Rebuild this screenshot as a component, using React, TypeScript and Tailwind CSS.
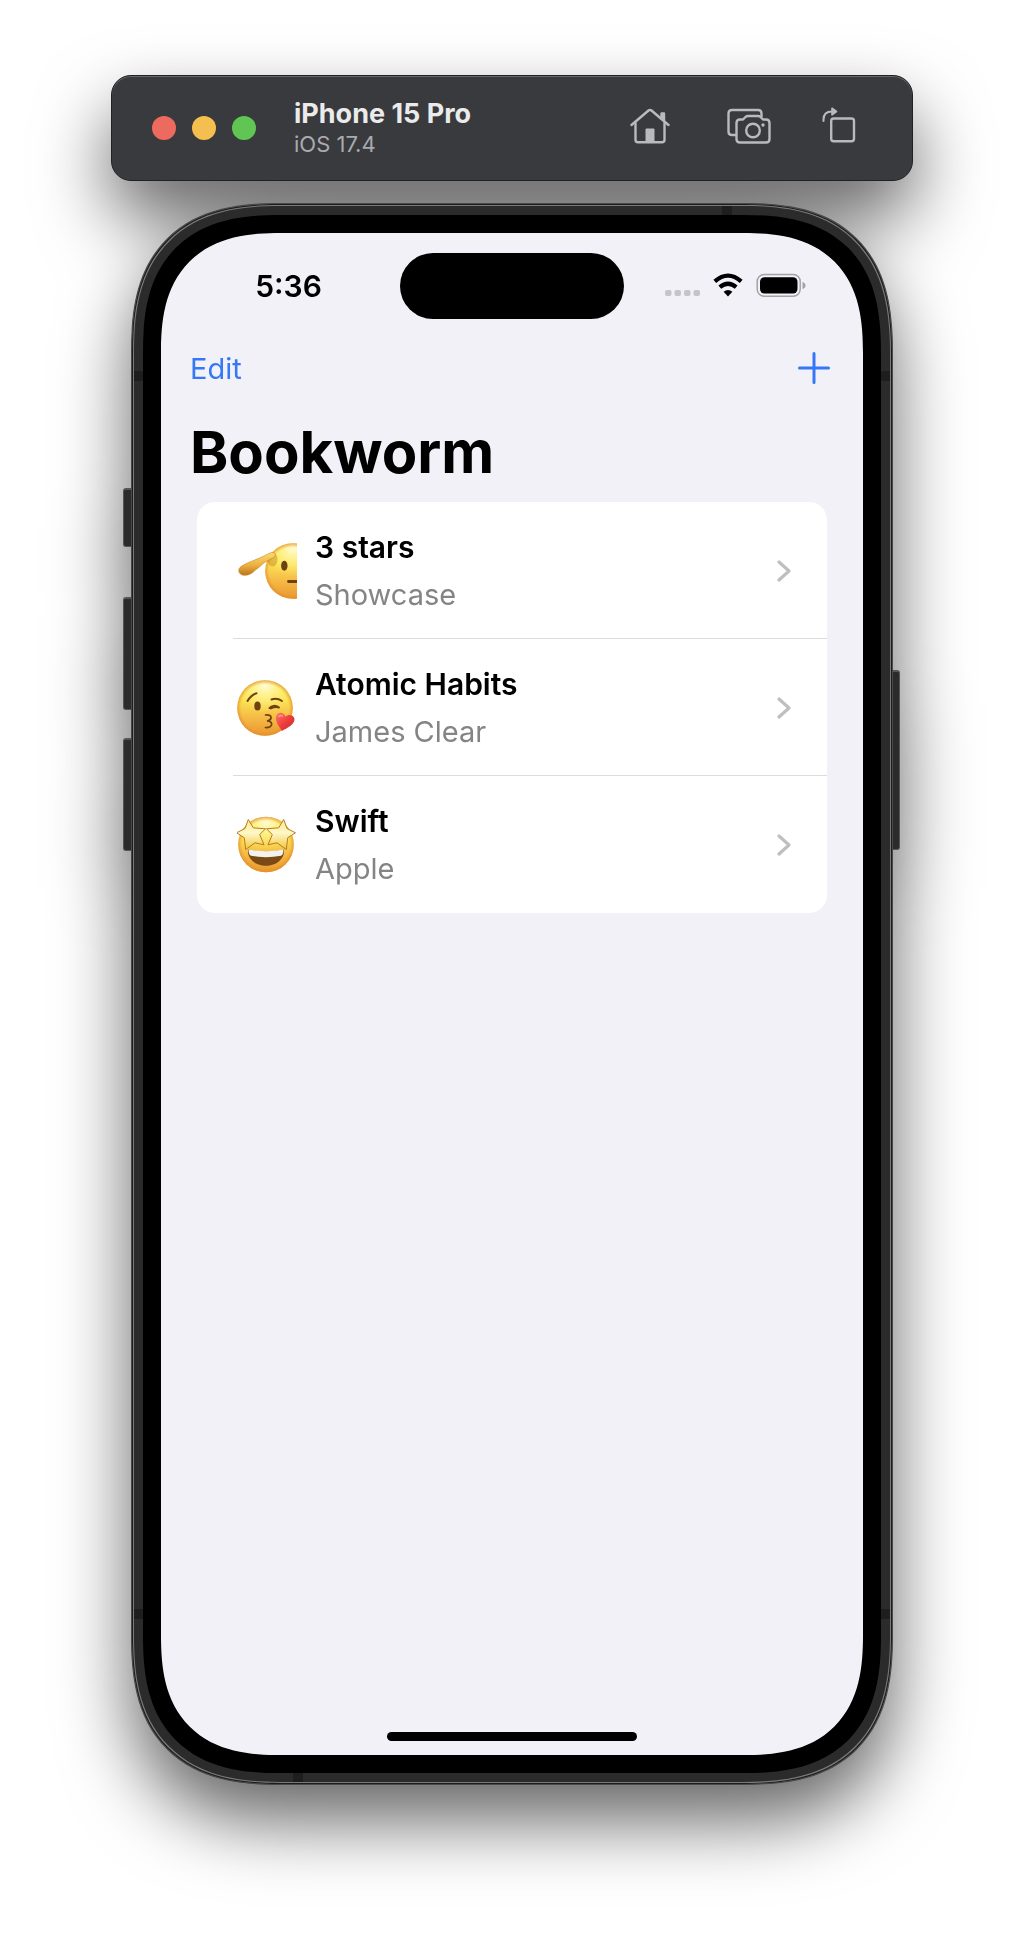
import React from "react";

type Book = { title: string; author: string; mood: string; face: React.ReactNode };

function Gradients() {
  return (
    <defs>
      <linearGradient id="skin" x1="0" y1="0" x2="0" y2="1">
        <stop offset="0" stopColor="#f8d44c" />
        <stop offset="0.12" stopColor="#fdec60" />
        <stop offset="0.35" stopColor="#fbe454" />
        <stop offset="0.65" stopColor="#f6bd48" />
        <stop offset="1" stopColor="#e9962f" />
      </linearGradient>
      <radialGradient id="shine" cx="0.5" cy="0.1" r="0.5">
        <stop offset="0" stopColor="#fffde0" stopOpacity="0.9" />
        <stop offset="1" stopColor="#fff27a" stopOpacity="0" />
      </radialGradient>
      <radialGradient id="rim" cx="0.5" cy="0.5" r="0.5">
        <stop offset="0.85" stopColor="#e8962f" stopOpacity="0" />
        <stop offset="1" stopColor="#e08a28" stopOpacity="0.7" />
      </radialGradient>
      <linearGradient id="arm" x1="0" y1="0" x2="0" y2="1">
        <stop offset="0" stopColor="#fbdc70" />
        <stop offset="0.55" stopColor="#eeb142" />
        <stop offset="1" stopColor="#b97418" />
      </linearGradient>
      <linearGradient id="star" x1="0" y1="0" x2="0" y2="1">
        <stop offset="0" stopColor="#fdeb8c" />
        <stop offset="0.45" stopColor="#fff7c8" />
        <stop offset="1" stopColor="#efc63c" />
      </linearGradient>
      <linearGradient id="heart" x1="0" y1="0" x2="1" y2="1">
        <stop offset="0" stopColor="#ff7468" />
        <stop offset="0.5" stopColor="#ee3f3c" />
        <stop offset="1" stopColor="#c9252a" />
      </linearGradient>
    </defs>
  );
}

function Head({ cx, cy, r }: { cx: number; cy: number; r: number }) {
  return (
    <>
      <circle cx={cx} cy={cy} r={r} fill="url(#skin)" />
      <circle cx={cx} cy={cy} r={r} fill="url(#shine)" />
      <circle cx={cx} cy={cy} r={r} fill="url(#rim)" />
    </>
  );
}

const salute = (
  <>
    <Head cx={56} cy={30} r={27.8} />
    <ellipse cx="35.500" cy="18.500" rx="5" ry="7" fill="#b8741c" opacity="0.4" />
    <path d="M36 11.500 C39 12 39 15.500 36.500 16.500 L30 20 C26 22 23 26 19 28.500 C15 33 10 35 6 34.200 C1 33 0.500 28 4 25.500 C10 21.500 21 18 27 15 C30 13.500 34 11 36 11.500 Z" fill="url(#arm)" stroke="#c98620" strokeWidth="0.6" />
    <ellipse cx="47.300" cy="24.700" rx="3.200" ry="5" fill="#6d4210" />
    <path d="M51.500 40.500 H62" stroke="#6d4210" strokeWidth="2.800" strokeLinecap="round" />
  </>
);

const kiss = (
  <g transform="translate(0 1)">
    <Head cx={28} cy={29} r={27.8} />
    <path d="M10.500 22 Q14 16 19.500 14.200" stroke="#6d4210" strokeWidth="2" fill="none" strokeLinecap="round" />
    <path d="M34.500 20.500 Q40 18.500 45 22" stroke="#6d4210" strokeWidth="2" fill="none" strokeLinecap="round" />
    <ellipse cx="20.500" cy="27" rx="3.200" ry="4.600" fill="#6d4210" />
    <path d="M32.500 29 Q37 24.500 42 28.500 M34 29.500 Q38 27.500 42 28.500" stroke="#6d4210" strokeWidth="1.900" fill="none" strokeLinecap="round" />
    <path d="M28.500 36 Q34.500 35.500 34 39 Q33.500 41.500 30 42 Q35.500 42.500 34.500 46 Q33.500 48.800 28.500 48.500" stroke="#6d4210" strokeWidth="1.700" fill="none" strokeLinecap="round" />
    <path d="M45 52 C41 46 37.500 41 39.500 36.500 C41.500 32.500 46.500 33 48.300 37.500 C51.500 34.500 57 36 57.500 40 C57.800 45.500 50 49 45 52 Z" fill="url(#heart)" />
    <path d="M42 37.500 Q43.500 35.500 45.500 37" stroke="#ff9d92" strokeWidth="1.500" fill="none" strokeLinecap="round" />
  </g>
);

const STAR = "M-0.500 17.800 L8 13.500 L11.300 4.500 L16.300 12.800 L28.500 13.800 L22.700 19.500 L27 29.800 L18 27.800 L8.700 34.500 L7.300 22.800 Z";

const starEyes = (
  <>
    <Head cx={29} cy={29.5} r={27.8} />
    <path d="M11 34.500 Q29 38.500 47 34.500 C48 44 39 50.800 29 50.800 C19 50.800 10 44 11 34.500 Z" fill="#7a4a14" />
    <path d="M11.500 34.500 Q29 38 46.500 34.500 Q46.500 39.500 44 40.800 Q29 43.500 14 40.800 Q11.500 39.500 11.500 34.500 Z" fill="#f4f2ef" />
    <g fill="url(#star)" stroke="#b97c1c" strokeWidth="1" strokeLinejoin="round">
      <path d={STAR} />
      <path d={STAR} transform="translate(58 0) scale(-1 1)" />
    </g>
  </>
);

const books: Book[] = [
  { title: "3 stars", author: "Showcase", mood: "Saluting face", face: salute },
  { title: "Atomic Habits", author: "James Clear", mood: "Face blowing a kiss", face: kiss },
  { title: "Swift", author: "Apple", mood: "Star-struck face", face: starEyes },
];

function HomeIcon() {
  return (
    <svg viewBox="0 0 40 36" className="h-9 w-10" fill="none" stroke="#b9bac0" strokeWidth="2.4" strokeLinecap="round" strokeLinejoin="round">
      <path d="M1.500 17 L18.500 2.500 Q20 1.300 21.500 2.500 L38.500 17" />
      <path d="M5.500 15 V32 Q5.500 34.200 8 34.200 H32 Q34.500 34.200 34.500 32 V15" />
      <path d="M31.500 10.500 V5.500 H34 V13" fill="#b9bac0" />
      <path d="M16 34 V21 H24 V34 Z" fill="#b9bac0" strokeWidth="1" />
    </svg>
  );
}

function CameraIcon() {
  return (
    <svg viewBox="0 0 44 36" className="h-9 w-11" fill="none" stroke="#b9bac0" strokeWidth="2.400" strokeLinecap="round" strokeLinejoin="round">
      <path d="M9 27 H5 Q1.500 27 1.500 23.500 V5.500 Q1.500 2 5 2 H31 Q34.500 2 34.500 5.500 V8.500" />
      <path d="M13 11.500 H16 L18.500 9 Q19.500 8 21 8 H31 Q32.500 8 33.500 9 L36 11.500 H39 Q42.500 11.500 42.500 15 V31 Q42.500 34.500 39 34.500 H13 Q9.500 34.500 9.500 31 V15 Q9.500 11.500 13 11.500 Z" />
      <circle cx="26" cy="22.500" r="6.800" />
      <circle cx="36" cy="17" r="1.700" fill="#b9bac0" stroke="none" />
    </svg>
  );
}

function RotateIcon() {
  return (
    <svg viewBox="0 0 34 38" className="h-[38px] w-[34px]" fill="none" stroke="#b9bac0" strokeWidth="2.400" strokeLinecap="round" strokeLinejoin="round">
      <rect x="9.200" y="11.500" width="22.800" height="22.800" rx="2.500" />
      <path d="M1.500 14 V12.500 Q1.500 4.500 10 4.500" strokeWidth="2" />
      <path d="M10 1.200 L14.500 4.500 L10 7.800 Z" fill="#b9bac0" strokeWidth="1.600" />
    </svg>
  );
}

function Toolbar() {
  return (
    <header className="flex h-[106px] w-full max-w-[802px] items-center rounded-[20px] border border-[#202123] bg-[#393a3d] pl-10 pr-14 shadow-[inset_0_1px_0_#66686a]">
      <div className="flex gap-4">
        <button aria-label="Close" className="size-6 rounded-full bg-[#ed6a5e]" />
        <button aria-label="Minimize" className="size-6 rounded-full bg-[#f5bf4f]" />
        <button aria-label="Zoom" className="size-6 rounded-full bg-[#61c554]" />
      </div>
      <div className="ml-[38px] grow pb-px">
        <div className="text-[27px] font-bold leading-8 text-[#ebebec]">iPhone 15 Pro</div>
        <div className="text-[22px] leading-7 text-[#a9aaaf]">iOS 17.4</div>
      </div>
      <div className="flex items-center pb-1">
        <button aria-label="Home"><HomeIcon /></button>
        <button aria-label="Screenshot" className="ml-[57px]"><CameraIcon /></button>
        <button aria-label="Rotate" className="ml-[51px]"><RotateIcon /></button>
      </div>
    </header>
  );
}

function StatusIcons() {
  return (
    <svg viewBox="0 0 142 26" className="h-[26px] w-[142px]" role="img" aria-label="No signal, Wi-Fi on, battery full">
      <g fill="#c4c4c9">
        <rect x="0" y="17" width="6.500" height="6" rx="2" />
        <rect x="9.500" y="17" width="6.500" height="6" rx="2" />
        <rect x="19" y="17" width="6.500" height="6" rx="2" />
        <rect x="28.500" y="17" width="6.500" height="6" rx="2" />
      </g>
      <g fill="none" stroke="#000" strokeWidth="4.200">
        <path d="M49.800 8.400 Q63 -3.200 76.200 8.400" />
        <path d="M54.800 14.200 Q63 7.200 71.200 14.200" />
      </g>
      <path d="M63 23.500 L58.600 18.800 Q63 15.200 67.400 18.800 Z" />
      <rect x="92.200" y="1.500" width="43" height="21.800" rx="7" fill="none" stroke="#a3a3a7" strokeWidth="1.500" />
      <rect x="95" y="4.300" width="37.500" height="16.200" rx="4.500" />
      <path d="M137.500 9 Q140.500 10 140.500 12.500 Q140.500 15 137.500 16 Z" fill="#a3a3a7" />
    </svg>
  );
}

function Row({ book, last }: { book: Book; last: boolean }) {
  return (
    <li className="pl-9">
      <a href="#" className={last ? "flex h-[137px] items-center" : "flex h-[137px] items-center border-b border-[#dcdcde] pt-0.5"}>
        <svg viewBox="0 0 60 60" className="ml-1 size-[60px] shrink-0" role="img" aria-label={book.mood}>
          <Gradients />
          {book.face}
        </svg>
        <div className="ml-[18px] grow">
          <div className="text-[30px] font-semibold leading-[47px] text-black">{book.title}</div>
          <div className="text-[29px] leading-[47px] text-[#848484]">{book.author}</div>
        </div>
        <svg viewBox="0 0 14 22" className="mr-9 h-[22px] w-[14px] shrink-0" fill="none" stroke="#bfbfc0" strokeWidth="3.200" strokeLinecap="round" strokeLinejoin="round" aria-hidden="true">
          <path d="M2 2 L12 11 L2 20" />
        </svg>
      </a>
    </li>
  );
}

function Screen() {
  return (
    <main className="relative flex aspect-[702/1522] w-full flex-col rounded-[120px] bg-[#f2f1f7] [corner-shape:superellipse(1.35)]">
      <div className="mt-5 grid h-[66px] grid-cols-[1fr_224px_1fr] items-center">
        <div className="pl-4 text-center text-[30px] font-semibold">5:36</div>
        <div className="h-[66px] rounded-full bg-black" />
        <div className="flex justify-end pr-14"><StatusIcons /></div>
      </div>
      <div className="mt-7 flex h-11 items-center justify-between px-[29px]">
        <button className="text-[29px] leading-10 text-[#3478f6]">Edit</button>
        <button aria-label="Add book" className="mr-1 pb-0.5">
          <svg viewBox="0 0 32 32" className="size-8" stroke="#3478f6" strokeWidth="3" strokeLinecap="round"><path d="M16 1.500 V30.500 M1.500 16 H30.500" /></svg>
        </button>
      </div>
      <h1 className="mt-[25px] px-[29px] text-[58px] font-bold leading-[72px]">Bookworm</h1>
      <ul className="mx-9 mt-[14px] rounded-[18px] bg-white">
        {books.map((book, i) => (
          <Row key={book.title} book={book} last={i === books.length - 1} />
        ))}
      </ul>
      <div className="mx-auto mb-[14px] mt-auto h-[9px] w-[250px] rounded-full bg-black" />
    </main>
  );
}

export default function App() {
  return (
    <div className="flex min-h-screen flex-col items-center overflow-hidden bg-white px-6 pb-[150px] pt-[75px] font-[Inter,sans-serif] text-black">
      <div className="flex w-full flex-col items-center gap-[22px] drop-shadow-[0_36px_36px_rgba(0,0,0,0.6)]">
        <Toolbar />
        <div className="relative w-full max-w-[762px]">
          <div className="absolute -left-2 top-[285px] h-[59px] w-[11px] rounded-l-[3px] border border-t-2 border-[#555] bg-[#2b2b2b]" />
          <div className="absolute -left-2 top-[394px] h-[113px] w-[11px] rounded-l-[3px] border border-t-2 border-[#555] bg-[#2b2b2b]" />
          <div className="absolute -left-2 top-[535px] h-[113px] w-[11px] rounded-l-[3px] border border-t-2 border-[#555] bg-[#2b2b2b]" />
          <div className="absolute -right-[7px] top-[467px] h-[180px] w-[10px] rounded-r-[3px] border border-t-2 border-[#555] bg-[#2b2b2b]" />
          <div className="relative rounded-[150px] border border-[#4a4a4a] bg-[#2b2b2b] p-[11px] shadow-[inset_0_0_0_1px_#1c1c1c,inset_0_0_0_2px_#7a7a7a] [corner-shape:superellipse(1.35)]">
            <div className="absolute left-[2px] top-[167px] h-[10px] w-[9px] bg-[#1e1e1e]" />
            <div className="absolute right-[2px] top-[167px] h-[10px] w-[9px] bg-[#1e1e1e]" />
            <div className="absolute bottom-[165px] left-[2px] h-[10px] w-[9px] bg-[#1e1e1e]" />
            <div className="absolute bottom-[165px] right-[2px] h-[10px] w-[9px] bg-[#1e1e1e]" />
            <div className="absolute right-[160px] top-[2px] h-[9px] w-[10px] bg-[#1e1e1e]" />
            <div className="absolute bottom-[2px] left-[161px] h-[9px] w-[10px] bg-[#1e1e1e]" />
            <div className="rounded-[138px] bg-black p-[18px] [corner-shape:superellipse(1.35)]">
              <Screen />
            </div>
          </div>
        </div>
      </div>
    </div>
  );
}
